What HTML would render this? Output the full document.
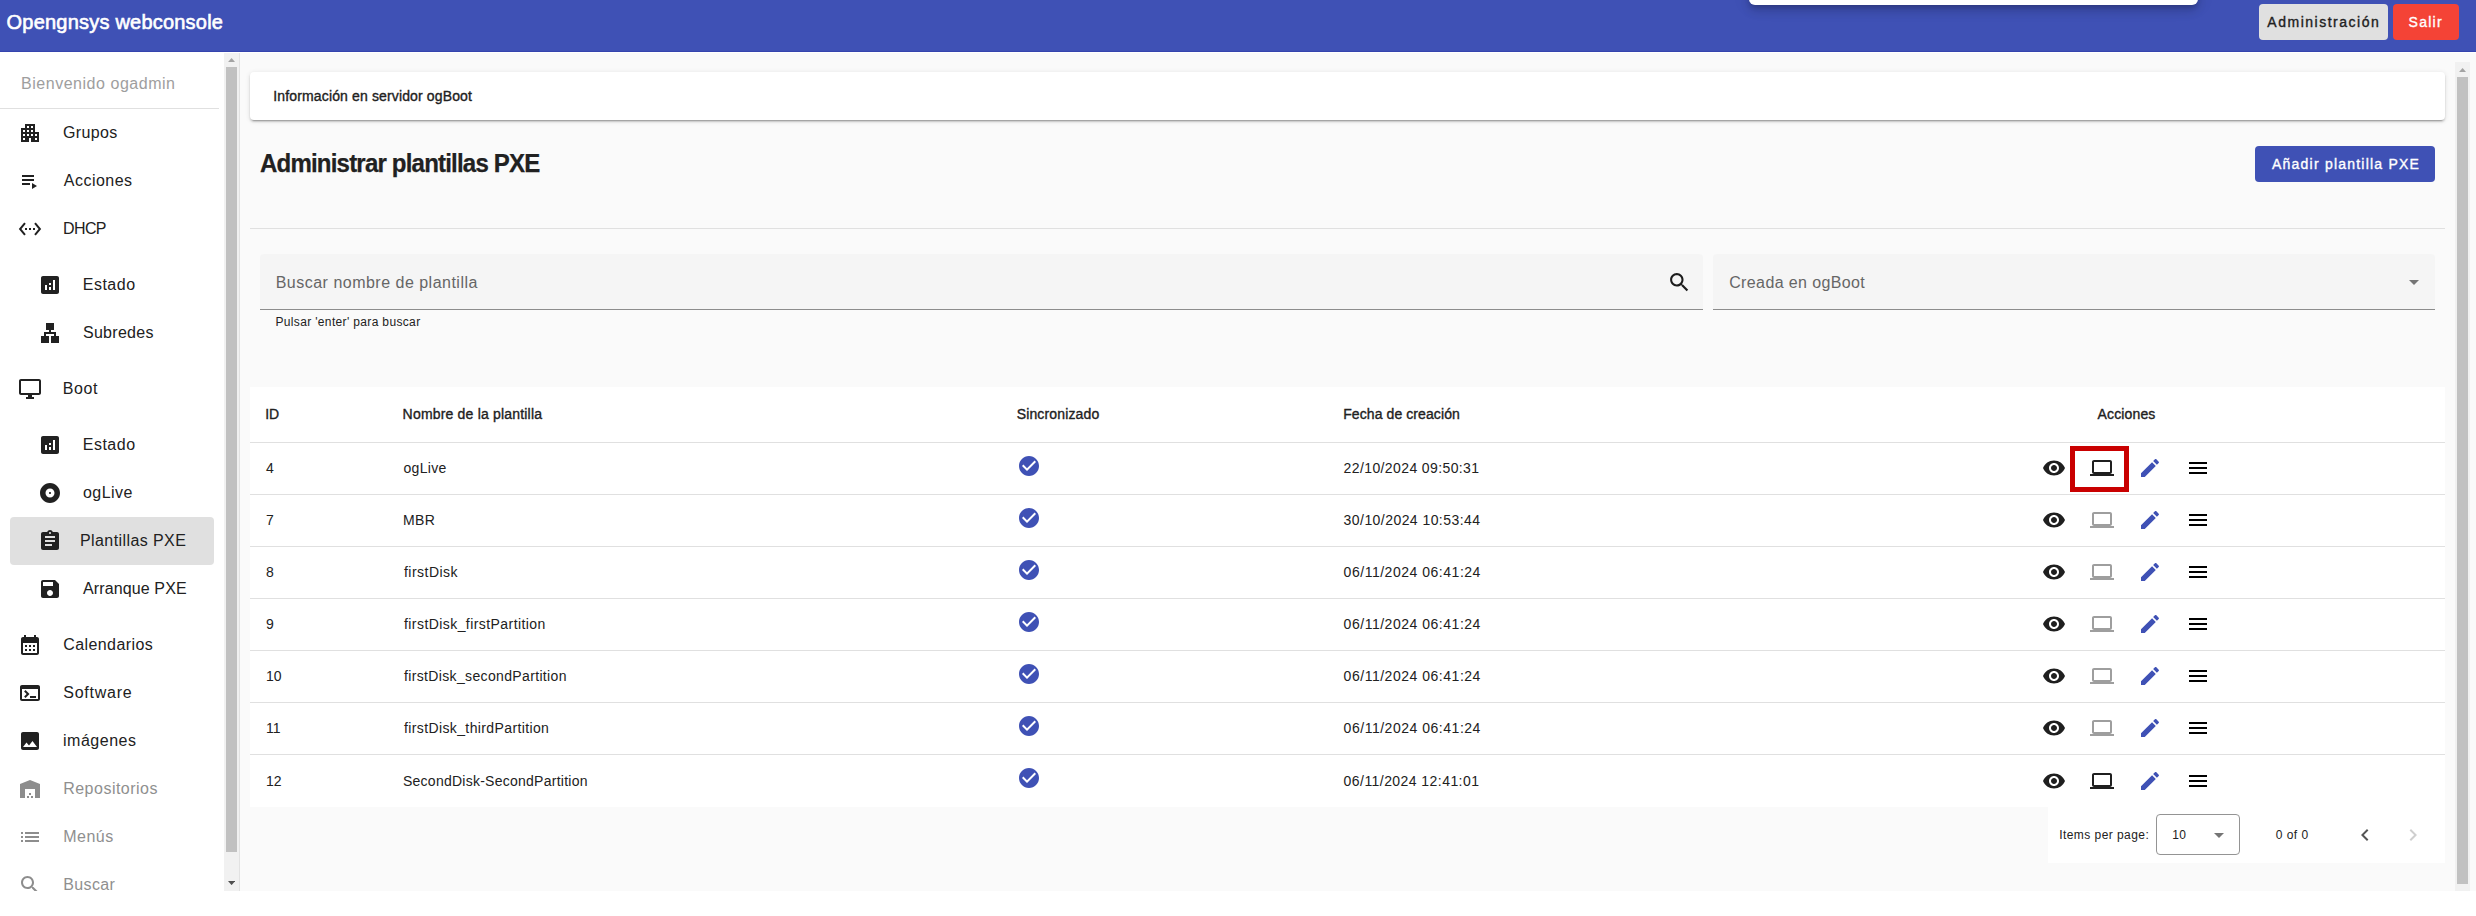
<!DOCTYPE html>
<html lang="es">
<head>
<meta charset="utf-8">
<title>Opengnsys webconsole</title>
<style>
*{box-sizing:border-box;margin:0;padding:0}
html,body{width:2476px;height:916px;overflow:hidden;background:#fff}
body{font-family:"Liberation Sans",Arial,sans-serif;color:#212121;position:relative;font-size:14px}
.abs{position:absolute}
.t{position:absolute;white-space:nowrap;line-height:1}
.med{-webkit-text-stroke:0.35px currentColor}
svg{display:block}
/* header */
#hdr{position:absolute;left:0;top:0;width:2476px;height:52px;background:#3f51b5;box-shadow:inset 0 -1px 0 rgba(30,40,160,.3);overflow:hidden}
#wline{position:absolute;left:0;top:52px;width:2476px;height:1px;background:#fff}
#brand{left:6px;top:12px;font-size:20px;color:#fff;-webkit-text-stroke:0.6px #fff}
#toast{position:absolute;left:1748.5px;top:-20px;width:449.3px;height:25px;background:#fff;border-radius:6px;box-shadow:0 3px 5px -1px rgba(0,0,0,.16),0 6px 10px 0 rgba(0,0,0,.12),0 1px 18px 0 rgba(0,0,0,.10)}
.hbtn{position:absolute;top:4px;height:36px;border-radius:4px}
#badm{left:2259px;width:129px;background:#e0e0e0}
#bsal{left:2393px;width:66px;background:#f44336}
/* sidebar */
#side{position:absolute;left:0;top:52px;width:240px;height:839px;background:#fff;border-right:1px solid #e2e2e2;overflow:hidden}
#sbar{position:absolute;left:224px;top:0;width:15px;height:839px;background:#f1f1f1}
#sbar .th{position:absolute;left:2px;top:15px;width:11px;height:785px;background:#c1c1c1}
.nav{position:absolute;left:0;width:224px;height:48px}
.nav svg{position:absolute;top:12px;width:24px;height:24px;fill:#212121}
.nav .t{top:16px;font-size:16px;letter-spacing:.5px}
.nav.l1 svg{left:18px}
.nav.l1 .t{left:63px}
.nav.l2 svg{left:38px}
.nav.l2 .t{left:83px}
.nav.dis .t{color:#8f8f8f}
.nav.dis svg{fill:#8d8d8d}
.nav.sel{left:10px;width:204px;background:#e0e0e0;border-radius:4px}
.nav.sel svg{left:28px}
.nav.sel .t{left:71px}
/* main */
#main{position:absolute;left:240px;top:53px;width:2236px;height:838px;background:#fafafa;overflow:hidden}
#mbar{position:absolute;left:2455px;top:62px;width:15px;height:829px;background:#f1f1f1}
#mbar .th{position:absolute;left:2px;top:15px;width:11px;height:807px;background:#c1c1c1}
#card{position:absolute;left:250px;top:72px;width:2195px;height:48px;background:#fff;border-radius:4px;box-shadow:0 3px 1px -2px rgba(0,0,0,.2),0 2px 2px 0 rgba(0,0,0,.14),0 1px 5px 0 rgba(0,0,0,.12)}
#h2{left:260px;top:151px;font-size:25.3px;font-weight:bold;-webkit-text-stroke:0.25px currentColor;transform:scaleX(.95);transform-origin:0 0}
#badd{position:absolute;left:2255px;top:146px;width:180px;height:36px;background:#3f51b5;border-radius:4px}
.btxt{font-size:14px;letter-spacing:1.25px;top:11px}
#hr{position:absolute;left:250px;top:228px;width:2195px;height:1px;background:#e0e0e0}
.fld{position:absolute;top:254px;height:56px;background:#f5f5f5;border-radius:4px 4px 0 0;border-bottom:1px solid #8c8c8c}
.fld .t{left:16px;top:21px;font-size:16px;color:#666;letter-spacing:.5px}
/* table */
#tbl{position:absolute;left:250px;top:387px;width:2195px;height:420px;background:#fff}
.row{position:absolute;left:0;width:2195px;border-bottom:1px solid #e0e0e0}
.row.h{top:0;height:56px}
.row .t{font-size:14px}
.row.h .t{top:20px}
.row.d{height:52px}
.row.d .t{top:18px}
.row.d.last{border-bottom:none}
.row.d.last .t{top:19px}
.row.d.last svg{top:14px}
.c1{left:16px}.c2{left:153px}.c3{left:767px}.c4{left:1094px}
.row svg{position:absolute;width:24px;height:24px;top:13px}
.chk{left:767px;fill:#3f51b5;width:24px;height:24px;top:11px !important}
.i1{left:1792px;fill:#1f1f1f}.i2{left:1840px;fill:#1f1f1f}.i2.off{fill:#9e9e9e}.i3{left:1888px;fill:#3f51b5}.i4{left:1936px;fill:#000}
#redbox{position:absolute;left:2070px;top:446px;width:59px;height:46px;border:5px solid #c90000}
#pag{position:absolute;left:2048px;top:807px;width:397px;height:56px;background:#fff}
#pag .t{font-size:12px;top:22px}
#psel{position:absolute;left:108px;top:7px;width:84px;height:41px;border:1px solid #949494;border-radius:4px}
</style>
</head>
<body>
<div id="main"></div>
<div id="mbar"><svg class="abs" style="left:3.9px;top:5.8px" width="7.2" height="4.1" viewBox="0 0 9 5" preserveAspectRatio="none"><path d="M0 5L4.5 0 9 5z" fill="#a3a3a3"/></svg><div class="th"></div></div>

<header id="hdr">
  <div id="toast"></div>
  <span class="t" id="brand" style="letter-spacing:0.21px;margin-left:0.6px">Opengnsys webconsole</span>
  <div class="hbtn" id="badm"><span class="t btxt med" style="left:9px;color:#212121;letter-spacing:1.51px;margin-left:-0.7px" id="tadm">Administración</span></div>
  <div class="hbtn" id="bsal"><span class="t btxt med" style="left:16px;color:#fff;letter-spacing:1.29px;margin-left:-0.5px" id="tsal">Salir</span></div>
</header>

<nav id="side">
  <span class="t" style="left:22px;top:24px;font-size:16px;letter-spacing:.5px;color:#9e9e9e;letter-spacing:0.53px;margin-left:-1.0px" id="welcome">Bienvenido ogadmin</span>
  <div class="abs" style="left:0;top:56px;width:219px;height:1px;background:#e0e0e0"></div>
  <a class="nav l1" style="top:57px"><svg viewBox="0 0 24 24"><path d="M17 11V3H7v4H3v14h8v-4h2v4h8V11h-4zM7 19H5v-2h2v2zm0-4H5v-2h2v2zm0-4H5V9h2v2zm4 4H9v-2h2v2zm0-4H9V9h2v2zm0-4H9V5h2v2zm4 8h-2v-2h2v2zm0-4h-2V9h2v2zm0-4h-2V5h2v2zm4 12h-2v-2h2v2zm0-4h-2v-2h2v2z"/></svg><span class="t" id="nav0" style="letter-spacing:0.32px;margin-left:0.1px">Grupos</span></a>
  <a class="nav l1" style="top:105px"><svg viewBox="0 0 24 24"><path d="M4 10h12v2H4zm0-4h12v2H4zm0 8h8v2H4zm10 0v6l5-3z"/></svg><span class="t" id="nav1" style="letter-spacing:0.47px;margin-left:0.8px">Acciones</span></a>
  <a class="nav l1" style="top:153px"><svg viewBox="0 0 24 24"><path d="M7.77 6.76L6.23 5.48.82 12l5.41 6.52 1.54-1.28L3.42 12l4.35-5.24zM7 13h2v-2H7v2zm10-2h-2v2h2v-2zm-6 2h2v-2h-2v2zm6.77-7.52l-1.54 1.28L20.58 12l-4.35 5.24 1.54 1.28L23.18 12l-5.41-6.52z"/></svg><span class="t" id="nav2" style="letter-spacing:-0.60px;margin-left:0.0px">DHCP</span></a>
  <a class="nav l2" style="top:209px"><svg viewBox="0 0 24 24"><path d="M19 3H5c-1.1 0-2 .9-2 2v14c0 1.1.9 2 2 2h14c1.1 0 2-.9 2-2V5c0-1.1-.9-2-2-2zM9 17H7v-5h2v5zm4 0h-2v-3h2v3zm0-5h-2v-2h2v2zm4 5h-2V7h2v10z"/></svg><span class="t" id="nav3" style="letter-spacing:0.51px;margin-left:-0.3px">Estado</span></a>
  <a class="nav l2" style="top:257px"><svg viewBox="0 0 24 24"><path d="M13 22h8v-7h-3v-4h-5V9h3V2H8v7h3v2H6v4H3v7h8v-7H8v-2h8v2h-3z"/></svg><span class="t" id="nav4" style="letter-spacing:0.27px;margin-left:0.0px">Subredes</span></a>
  <a class="nav l1" style="top:313px"><svg viewBox="0 0 24 24"><path d="M21 2H3c-1.1 0-2 .9-2 2v12c0 1.1.9 2 2 2h7v2H8v2h8v-2h-2v-2h7c1.1 0 2-.9 2-2V4c0-1.1-.9-2-2-2zm0 14H3V4h18v12z"/></svg><span class="t" id="nav5" style="letter-spacing:0.54px;margin-left:-0.2px">Boot</span></a>
  <a class="nav l2" style="top:369px"><svg viewBox="0 0 24 24"><path d="M19 3H5c-1.1 0-2 .9-2 2v14c0 1.1.9 2 2 2h14c1.1 0 2-.9 2-2V5c0-1.1-.9-2-2-2zM9 17H7v-5h2v5zm4 0h-2v-3h2v3zm0-5h-2v-2h2v2zm4 5h-2V7h2v10z"/></svg><span class="t" id="nav6" style="letter-spacing:0.51px;margin-left:-0.3px">Estado</span></a>
  <a class="nav l2" style="top:417px"><svg viewBox="0 0 24 24"><path d="M12 2C6.48 2 2 6.48 2 12s4.48 10 10 10 10-4.48 10-10S17.52 2 12 2zm0 14.5c-2.49 0-4.5-2.01-4.5-4.5S9.51 7.5 12 7.5s4.5 2.01 4.5 4.5-2.01 4.5-4.5 4.5zm0-5.5c-.55 0-1 .45-1 1s.45 1 1 1 1-.45 1-1-.45-1-1-1z"/></svg><span class="t" id="nav7" style="letter-spacing:0.49px;margin-left:-0.1px">ogLive</span></a>
  <a class="nav l2 sel" style="top:465px"><svg viewBox="0 0 24 24"><path d="M19 3h-4.18C14.4 1.84 13.3 1 12 1c-1.3 0-2.4.84-2.82 2H5c-1.1 0-2 .9-2 2v14c0 1.1.9 2 2 2h14c1.1 0 2-.9 2-2V5c0-1.1-.9-2-2-2zm-7 0c.55 0 1 .45 1 1s-.45 1-1 1-1-.45-1-1 .45-1 1-1zm2 14H7v-2h7v2zm3-4H7v-2h10v2zm0-4H7V7h10v2z"/></svg><span class="t" id="nav8" style="letter-spacing:0.41px;margin-left:-1.0px">Plantillas PXE</span></a>
  <a class="nav l2" style="top:513px"><svg viewBox="0 0 24 24"><path d="M17 3H5c-1.11 0-2 .9-2 2v14c0 1.1.89 2 2 2h14c1.1 0 2-.9 2-2V7l-4-4zm-5 16c-1.66 0-3-1.34-3-3s1.34-3 3-3 3 1.34 3 3-1.34 3-3 3zm3-10H5V5h10v4z"/></svg><span class="t" id="nav9" style="letter-spacing:0.12px;margin-left:0.0px">Arranque PXE</span></a>
  <a class="nav l1" style="top:569px"><svg viewBox="0 0 24 24"><path d="M19 4h-1V2h-2v2H8V2H6v2H5c-1.11 0-1.99.9-1.99 2L3 20c0 1.1.89 2 2 2h14c1.1 0 2-.9 2-2V6c0-1.1-.9-2-2-2zm0 16H5V10h14v10zM9 14H7v-2h2v2zm4 0h-2v-2h2v2zm4 0h-2v-2h2v2zm-8 4H7v-2h2v2zm4 0h-2v-2h2v2zm4 0h-2v-2h2v2z"/></svg><span class="t" id="nav10" style="letter-spacing:0.42px;margin-left:0.2px">Calendarios</span></a>
  <a class="nav l1" style="top:617px"><svg viewBox="0 0 24 24"><path d="M20 4H4c-1.11 0-2 .9-2 2v12c0 1.1.89 2 2 2h16c1.1 0 2-.9 2-2V6c0-1.1-.9-2-2-2zm0 14H4V8h16v10zm-2-1h-6v-2h6v2zM7.5 17l-1.41-1.41L8.67 13l-2.59-2.59L7.5 9l4 4-4 4z"/></svg><span class="t" id="nav11" style="letter-spacing:0.74px;margin-left:0.3px">Software</span></a>
  <a class="nav l1" style="top:665px"><svg viewBox="0 0 24 24"><path d="M21 19V5c0-1.1-.9-2-2-2H5c-1.1 0-2 .9-2 2v14c0 1.1.9 2 2 2h14c1.1 0 2-.9 2-2zM8.5 13.5l2.5 3.01L14.5 12l4.5 6H5l3.5-4.5z"/></svg><span class="t" id="nav12" style="letter-spacing:0.51px;margin-left:0.0px">imágenes</span></a>
  <a class="nav l1 dis" style="top:713px"><svg viewBox="0 0 24 24"><path d="M22 21V7L12 3 2 7v14h5v-9h10v9h5zm-11-2H9v2h2v-2zm2-3h-2v2h2v-2zm2 3h-2v2h2v-2z"/></svg><span class="t" id="nav13" style="letter-spacing:0.49px;margin-left:0.2px">Repositorios</span></a>
  <a class="nav l1 dis" style="top:761px"><svg viewBox="0 0 24 24"><path d="M3 13h2v-2H3v2zm0 4h2v-2H3v2zm0-8h2V7H3v2zm4 4h14v-2H7v2zm0 4h14v-2H7v2zM7 7v2h14V7H7z"/></svg><span class="t" id="nav14" style="letter-spacing:0.49px;margin-left:0.2px">Menús</span></a>
  <a class="nav l1 dis" style="top:809px"><svg viewBox="0 0 24 24"><path d="M15.5 14h-.79l-.28-.27C15.41 12.59 16 11.11 16 9.5 16 5.91 13.09 3 9.5 3S3 5.91 3 9.5 5.91 16 9.5 16c1.61 0 3.09-.59 4.23-1.57l.27.28v.79l5 4.99L20.49 19l-4.99-5zm-6 0C7.01 14 5 11.99 5 9.5S7.01 5 9.5 5 14 7.01 14 9.5 11.99 14 9.5 14z"/></svg><span class="t" id="nav15" style="letter-spacing:0.38px;margin-left:0.2px">Buscar</span></a>
  <div id="sbar"><svg class="abs" style="left:3.9px;top:5.8px" width="7.2" height="4.1" viewBox="0 0 9 5" preserveAspectRatio="none"><path d="M0 5L4.5 0 9 5z" fill="#a3a3a3"/></svg><div class="th"></div><svg class="abs" style="left:3.9px;top:828.8px" width="7.2" height="4.1" viewBox="0 0 9 5" preserveAspectRatio="none"><path d="M0 0L4.5 5 9 0z" fill="#505050"/></svg></div>
</nav>

<div id="wline"></div>
<div id="card"><span class="t med" style="left:24px;top:17px;font-size:14px;letter-spacing:0.14px;margin-left:-0.7px" id="tcard">Información en servidor ogBoot</span></div>
<h2 class="t" id="h2" style="letter-spacing:-0.85px;margin-left:0.0px">Administrar plantillas PXE</h2>
<div id="badd"><span class="t btxt med" style="left:16px;color:#fff;letter-spacing:1.22px;margin-left:1.0px" id="tadd">Añadir plantilla PXE</span></div>
<div id="hr"></div>

<div class="fld" style="left:260px;width:1443px"><span class="t" id="lsearch" style="letter-spacing:0.49px;margin-left:-0.3px">Buscar nombre de plantilla</span>
  <svg class="abs" style="left:1406.6px;top:15.6px" width="24.8" height="24.8" viewBox="0 0 24 24"><path fill="#1c1c1c" d="M15.5 14h-.79l-.28-.27C15.41 12.59 16 11.11 16 9.5 16 5.91 13.09 3 9.5 3S3 5.91 3 9.5 5.91 16 9.5 16c1.61 0 3.09-.59 4.23-1.57l.27.28v.79l5 4.99L20.49 19l-4.99-5zm-6 0C7.01 14 5 11.99 5 9.5S7.01 5 9.5 5 14 7.01 14 9.5 11.99 14 9.5 14z"/></svg>
</div>
<span class="t" style="left:276px;top:316px;font-size:12px;letter-spacing:.3px;letter-spacing:0.35px;margin-left:-0.6px" id="hint">Pulsar 'enter' para buscar</span>
<div class="fld" style="left:1713px;width:722px"><span class="t" id="lsel" style="letter-spacing:0.38px;margin-left:0.2px">Creada en ogBoot</span>
  <svg class="abs" style="left:696px;top:26px" width="10" height="5" viewBox="0 0 10 5"><path d="M0 0l5 5 5-5z" fill="#757575"/></svg>
</div>

<div id="tbl">
  <div class="row h">
    <span class="t med c1" id="th1" style="letter-spacing:-0.18px;margin-left:-0.7px">ID</span><span class="t med c2" id="th2" style="letter-spacing:0.19px;margin-left:-0.4px">Nombre de la plantilla</span><span class="t med c3" id="th3" style="letter-spacing:0.14px;margin-left:-0.3px">Sincronizado</span><span class="t med c4" id="th4" style="letter-spacing:0.09px;margin-left:-0.8px">Fecha de creación</span><span class="t med" style="left:1847px;letter-spacing:0.13px;margin-left:0.6px" id="th5">Acciones</span>
  </div>
  <div class="row d" style="top:56px"><span class="t c1" id="r0a">4</span><span class="t c2" id="r0b" style="letter-spacing:0.33px;margin-left:0.5px">ogLive</span><svg class="chk" viewBox="0 0 24 24"><path d="M12 2C6.48 2 2 6.48 2 12s4.48 10 10 10 10-4.48 10-10S17.52 2 12 2zm-2 15l-5-5 1.41-1.41L10 14.17l7.59-7.59L19 8l-9 9z"/></svg><span class="t c4" id="r0d" style="letter-spacing:0.39px;margin-left:-0.4px">22/10/2024 09:50:31</span><svg class="i1" viewBox="0 0 24 24"><path d="M12 4.5C7 4.5 2.73 7.61 1 12c1.73 4.39 6 7.5 11 7.5s9.27-3.11 11-7.5c-1.73-4.39-6-7.5-11-7.5zM12 17c-2.76 0-5-2.24-5-5s2.24-5 5-5 5 2.24 5 5-2.24 5-5 5zm0-8c-1.66 0-3 1.34-3 3s1.34 3 3 3 3-1.34 3-3-1.34-3-3-3z"/></svg><svg class="i2" viewBox="0 0 24 24"><path d="M20 18c1.1 0 1.99-.9 1.99-2L22 6c0-1.1-.9-2-2-2H4c-1.1 0-2 .9-2 2v10c0 1.1.9 2 2 2H0v2h24v-2h-4zM4 6h16v10H4V6z"/></svg><svg class="i3" viewBox="0 0 24 24"><path d="M3 17.25V21h3.75L17.81 9.94l-3.75-3.75L3 17.25zM20.71 7.04c.39-.39.39-1.02 0-1.41l-2.34-2.34c-.39-.39-1.02-.39-1.41 0l-1.83 1.83 3.75 3.75 1.83-1.83z"/></svg><svg class="i4" viewBox="0 0 24 24"><path d="M3 18h18v-2H3v2zm0-5h18v-2H3v2zm0-7v2h18V6H3z"/></svg></div>
  <div class="row d" style="top:108px"><span class="t c1" id="r1a">7</span><span class="t c2" id="r1b" style="letter-spacing:0.34px;margin-left:0.0px">MBR</span><svg class="chk" viewBox="0 0 24 24"><path d="M12 2C6.48 2 2 6.48 2 12s4.48 10 10 10 10-4.48 10-10S17.52 2 12 2zm-2 15l-5-5 1.41-1.41L10 14.17l7.59-7.59L19 8l-9 9z"/></svg><span class="t c4" id="r1d" style="letter-spacing:0.44px;margin-left:-0.4px">30/10/2024 10:53:44</span><svg class="i1" viewBox="0 0 24 24"><path d="M12 4.5C7 4.5 2.73 7.61 1 12c1.73 4.39 6 7.5 11 7.5s9.27-3.11 11-7.5c-1.73-4.39-6-7.5-11-7.5zM12 17c-2.76 0-5-2.24-5-5s2.24-5 5-5 5 2.24 5 5-2.24 5-5 5zm0-8c-1.66 0-3 1.34-3 3s1.34 3 3 3 3-1.34 3-3-1.34-3-3-3z"/></svg><svg class="i2 off" viewBox="0 0 24 24"><path d="M20 18c1.1 0 1.99-.9 1.99-2L22 6c0-1.1-.9-2-2-2H4c-1.1 0-2 .9-2 2v10c0 1.1.9 2 2 2H0v2h24v-2h-4zM4 6h16v10H4V6z"/></svg><svg class="i3" viewBox="0 0 24 24"><path d="M3 17.25V21h3.75L17.81 9.94l-3.75-3.75L3 17.25zM20.71 7.04c.39-.39.39-1.02 0-1.41l-2.34-2.34c-.39-.39-1.02-.39-1.41 0l-1.83 1.83 3.75 3.75 1.83-1.83z"/></svg><svg class="i4" viewBox="0 0 24 24"><path d="M3 18h18v-2H3v2zm0-5h18v-2H3v2zm0-7v2h18V6H3z"/></svg></div>
  <div class="row d" style="top:160px"><span class="t c1" id="r2a">8</span><span class="t c2" id="r2b" style="letter-spacing:0.47px;margin-left:1.0px">firstDisk</span><svg class="chk" viewBox="0 0 24 24"><path d="M12 2C6.48 2 2 6.48 2 12s4.48 10 10 10 10-4.48 10-10S17.52 2 12 2zm-2 15l-5-5 1.41-1.41L10 14.17l7.59-7.59L19 8l-9 9z"/></svg><span class="t c4" id="r2d" style="letter-spacing:0.52px;margin-left:-0.4px">06/11/2024 06:41:24</span><svg class="i1" viewBox="0 0 24 24"><path d="M12 4.5C7 4.5 2.73 7.61 1 12c1.73 4.39 6 7.5 11 7.5s9.27-3.11 11-7.5c-1.73-4.39-6-7.5-11-7.5zM12 17c-2.76 0-5-2.24-5-5s2.24-5 5-5 5 2.24 5 5-2.24 5-5 5zm0-8c-1.66 0-3 1.34-3 3s1.34 3 3 3 3-1.34 3-3-1.34-3-3-3z"/></svg><svg class="i2 off" viewBox="0 0 24 24"><path d="M20 18c1.1 0 1.99-.9 1.99-2L22 6c0-1.1-.9-2-2-2H4c-1.1 0-2 .9-2 2v10c0 1.1.9 2 2 2H0v2h24v-2h-4zM4 6h16v10H4V6z"/></svg><svg class="i3" viewBox="0 0 24 24"><path d="M3 17.25V21h3.75L17.81 9.94l-3.75-3.75L3 17.25zM20.71 7.04c.39-.39.39-1.02 0-1.41l-2.34-2.34c-.39-.39-1.02-.39-1.41 0l-1.83 1.83 3.75 3.75 1.83-1.83z"/></svg><svg class="i4" viewBox="0 0 24 24"><path d="M3 18h18v-2H3v2zm0-5h18v-2H3v2zm0-7v2h18V6H3z"/></svg></div>
  <div class="row d" style="top:212px"><span class="t c1" id="r3a">9</span><span class="t c2" id="r3b" style="letter-spacing:0.43px;margin-left:1.0px">firstDisk_firstPartition</span><svg class="chk" viewBox="0 0 24 24"><path d="M12 2C6.48 2 2 6.48 2 12s4.48 10 10 10 10-4.48 10-10S17.52 2 12 2zm-2 15l-5-5 1.41-1.41L10 14.17l7.59-7.59L19 8l-9 9z"/></svg><span class="t c4" id="r3d" style="letter-spacing:0.52px;margin-left:-0.4px">06/11/2024 06:41:24</span><svg class="i1" viewBox="0 0 24 24"><path d="M12 4.5C7 4.5 2.73 7.61 1 12c1.73 4.39 6 7.5 11 7.5s9.27-3.11 11-7.5c-1.73-4.39-6-7.5-11-7.5zM12 17c-2.76 0-5-2.24-5-5s2.24-5 5-5 5 2.24 5 5-2.24 5-5 5zm0-8c-1.66 0-3 1.34-3 3s1.34 3 3 3 3-1.34 3-3-1.34-3-3-3z"/></svg><svg class="i2 off" viewBox="0 0 24 24"><path d="M20 18c1.1 0 1.99-.9 1.99-2L22 6c0-1.1-.9-2-2-2H4c-1.1 0-2 .9-2 2v10c0 1.1.9 2 2 2H0v2h24v-2h-4zM4 6h16v10H4V6z"/></svg><svg class="i3" viewBox="0 0 24 24"><path d="M3 17.25V21h3.75L17.81 9.94l-3.75-3.75L3 17.25zM20.71 7.04c.39-.39.39-1.02 0-1.41l-2.34-2.34c-.39-.39-1.02-.39-1.41 0l-1.83 1.83 3.75 3.75 1.83-1.83z"/></svg><svg class="i4" viewBox="0 0 24 24"><path d="M3 18h18v-2H3v2zm0-5h18v-2H3v2zm0-7v2h18V6H3z"/></svg></div>
  <div class="row d" style="top:264px"><span class="t c1" id="r4a">10</span><span class="t c2" id="r4b" style="letter-spacing:0.35px;margin-left:1.0px">firstDisk_secondPartition</span><svg class="chk" viewBox="0 0 24 24"><path d="M12 2C6.48 2 2 6.48 2 12s4.48 10 10 10 10-4.48 10-10S17.52 2 12 2zm-2 15l-5-5 1.41-1.41L10 14.17l7.59-7.59L19 8l-9 9z"/></svg><span class="t c4" id="r4d" style="letter-spacing:0.52px;margin-left:-0.4px">06/11/2024 06:41:24</span><svg class="i1" viewBox="0 0 24 24"><path d="M12 4.5C7 4.5 2.73 7.61 1 12c1.73 4.39 6 7.5 11 7.5s9.27-3.11 11-7.5c-1.73-4.39-6-7.5-11-7.5zM12 17c-2.76 0-5-2.24-5-5s2.24-5 5-5 5 2.24 5 5-2.24 5-5 5zm0-8c-1.66 0-3 1.34-3 3s1.34 3 3 3 3-1.34 3-3-1.34-3-3-3z"/></svg><svg class="i2 off" viewBox="0 0 24 24"><path d="M20 18c1.1 0 1.99-.9 1.99-2L22 6c0-1.1-.9-2-2-2H4c-1.1 0-2 .9-2 2v10c0 1.1.9 2 2 2H0v2h24v-2h-4zM4 6h16v10H4V6z"/></svg><svg class="i3" viewBox="0 0 24 24"><path d="M3 17.25V21h3.75L17.81 9.94l-3.75-3.75L3 17.25zM20.71 7.04c.39-.39.39-1.02 0-1.41l-2.34-2.34c-.39-.39-1.02-.39-1.41 0l-1.83 1.83 3.75 3.75 1.83-1.83z"/></svg><svg class="i4" viewBox="0 0 24 24"><path d="M3 18h18v-2H3v2zm0-5h18v-2H3v2zm0-7v2h18V6H3z"/></svg></div>
  <div class="row d" style="top:316px"><span class="t c1" id="r5a">11</span><span class="t c2" id="r5b" style="letter-spacing:0.38px;margin-left:1.0px">firstDisk_thirdPartition</span><svg class="chk" viewBox="0 0 24 24"><path d="M12 2C6.48 2 2 6.48 2 12s4.48 10 10 10 10-4.48 10-10S17.52 2 12 2zm-2 15l-5-5 1.41-1.41L10 14.17l7.59-7.59L19 8l-9 9z"/></svg><span class="t c4" id="r5d" style="letter-spacing:0.52px;margin-left:-0.4px">06/11/2024 06:41:24</span><svg class="i1" viewBox="0 0 24 24"><path d="M12 4.5C7 4.5 2.73 7.61 1 12c1.73 4.39 6 7.5 11 7.5s9.27-3.11 11-7.5c-1.73-4.39-6-7.5-11-7.5zM12 17c-2.76 0-5-2.24-5-5s2.24-5 5-5 5 2.24 5 5-2.24 5-5 5zm0-8c-1.66 0-3 1.34-3 3s1.34 3 3 3 3-1.34 3-3-1.34-3-3-3z"/></svg><svg class="i2 off" viewBox="0 0 24 24"><path d="M20 18c1.1 0 1.99-.9 1.99-2L22 6c0-1.1-.9-2-2-2H4c-1.1 0-2 .9-2 2v10c0 1.1.9 2 2 2H0v2h24v-2h-4zM4 6h16v10H4V6z"/></svg><svg class="i3" viewBox="0 0 24 24"><path d="M3 17.25V21h3.75L17.81 9.94l-3.75-3.75L3 17.25zM20.71 7.04c.39-.39.39-1.02 0-1.41l-2.34-2.34c-.39-.39-1.02-.39-1.41 0l-1.83 1.83 3.75 3.75 1.83-1.83z"/></svg><svg class="i4" viewBox="0 0 24 24"><path d="M3 18h18v-2H3v2zm0-5h18v-2H3v2zm0-7v2h18V6H3z"/></svg></div>
  <div class="row d last" style="top:368px"><span class="t c1" id="r6a">12</span><span class="t c2" id="r6b" style="letter-spacing:0.25px;margin-left:0.0px">SecondDisk-SecondPartition</span><svg class="chk" viewBox="0 0 24 24"><path d="M12 2C6.48 2 2 6.48 2 12s4.48 10 10 10 10-4.48 10-10S17.52 2 12 2zm-2 15l-5-5 1.41-1.41L10 14.17l7.59-7.59L19 8l-9 9z"/></svg><span class="t c4" id="r6d" style="letter-spacing:0.44px;margin-left:-0.4px">06/11/2024 12:41:01</span><svg class="i1" viewBox="0 0 24 24"><path d="M12 4.5C7 4.5 2.73 7.61 1 12c1.73 4.39 6 7.5 11 7.5s9.27-3.11 11-7.5c-1.73-4.39-6-7.5-11-7.5zM12 17c-2.76 0-5-2.24-5-5s2.24-5 5-5 5 2.24 5 5-2.24 5-5 5zm0-8c-1.66 0-3 1.34-3 3s1.34 3 3 3 3-1.34 3-3-1.34-3-3-3z"/></svg><svg class="i2" viewBox="0 0 24 24"><path d="M20 18c1.1 0 1.99-.9 1.99-2L22 6c0-1.1-.9-2-2-2H4c-1.1 0-2 .9-2 2v10c0 1.1.9 2 2 2H0v2h24v-2h-4zM4 6h16v10H4V6z"/></svg><svg class="i3" viewBox="0 0 24 24"><path d="M3 17.25V21h3.75L17.81 9.94l-3.75-3.75L3 17.25zM20.71 7.04c.39-.39.39-1.02 0-1.41l-2.34-2.34c-.39-.39-1.02-.39-1.41 0l-1.83 1.83 3.75 3.75 1.83-1.83z"/></svg><svg class="i4" viewBox="0 0 24 24"><path d="M3 18h18v-2H3v2zm0-5h18v-2H3v2zm0-7v2h18V6H3z"/></svg></div>
</div>
<div id="redbox"></div>

<div id="pag">
  <span class="t" style="left:12px;letter-spacing:0.44px;margin-left:-0.8px" id="pitems">Items per page:</span>
  <div id="psel"><span class="t" style="left:16px;top:14px;letter-spacing:0.22px;margin-left:-0.7px" id="p10">10</span><svg class="abs" style="left:57px;top:18px" width="10" height="5" viewBox="0 0 10 5"><path d="M0 0l5 5 5-5z" fill="#757575"/></svg></div>
  <span class="t" style="left:228px;letter-spacing:0.45px;margin-left:-0.2px" id="pof">0 of 0</span>
  <svg class="abs" style="left:305px;top:16px" width="24" height="24" viewBox="0 0 24 24"><path fill="#555" d="M15.41 7.41L14 6l-6 6 6 6 1.41-1.41L10.83 12z"/></svg>
  <svg class="abs" style="left:353px;top:16px" width="24" height="24" viewBox="0 0 24 24"><path fill="#cfcfcf" d="M10 6L8.59 7.41 13.17 12l-4.58 4.59L10 18l6-6z"/></svg>
</div>
</body>
</html>
